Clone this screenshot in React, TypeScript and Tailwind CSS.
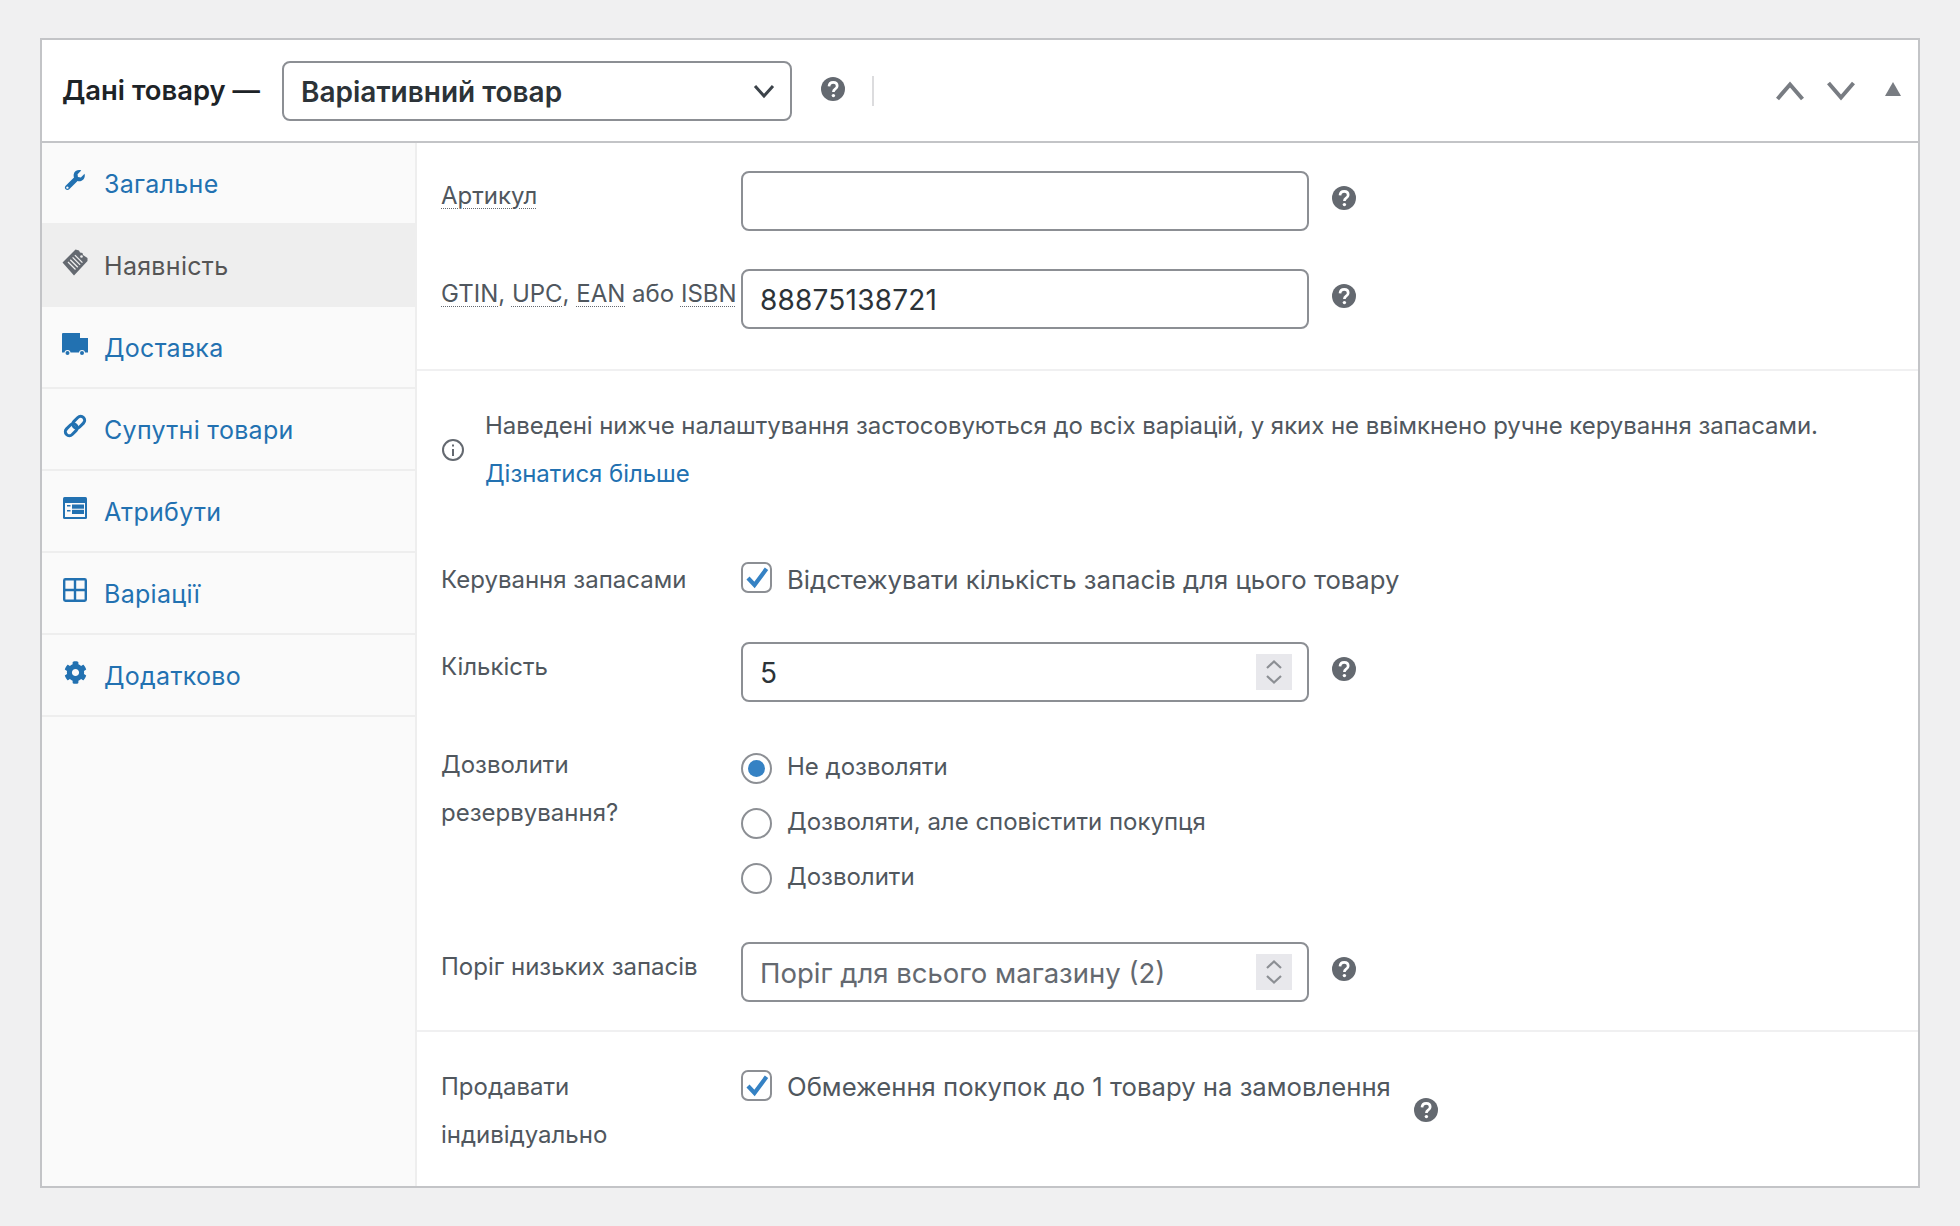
import React from "react";
import { FaCog } from "react-icons/fa";

const Help = ({ className = "" }: { className?: string }) => (
  <svg viewBox="0 0 24 24" className={`w-6 h-6 shrink-0 ${className}`}>
    <circle cx="12" cy="12" r="12" fill="#646970" />
    <path d="M8 9.4 C8.2 6.8 9.9 5.4 12.2 5.4 C14.6 5.4 16.2 6.9 16.2 8.9 C16.2 10.5 15.3 11.3 14.1 12.1 C13 12.9 12.4 13.4 12.4 15" fill="none" stroke="#ffffff" strokeWidth="2.7" />
    <circle cx="12.4" cy="18.6" r="1.7" fill="#ffffff" />
  </svg>
);

const WrenchIcon = () => (
  <svg viewBox="0 0 24 24" className="w-[22px] h-[22px]" fill="#2271b1">
    <path fillRule="evenodd" d="M22.4 5.2 L18.4 9.2 L15.2 8.8 L14.8 5.6 L18.8 1.6 C15.6 0.4 11.4 2 10.6 5.6 C10.3 7 10.5 8.2 10.9 9.2 L1.8 18.2 C0.6 19.4 0.7 21.2 1.8 22.2 C2.9 23.3 4.6 23.3 5.7 22.2 L14.8 13.2 C19 14.6 24 10.8 22.4 5.2 Z M3.7 19 A1.3 1.3 0 1 0 3.71 19 Z" />
  </svg>
);
const TagIcon = () => (
  <svg viewBox="0 0 26 27" className="w-[26px] h-[27px]" fill="#646970">
    <path d="M0.5 13.5 L13.5 0.5 L17 1.5 L18 3.5 L20.5 4 L21 6 L25.5 9 L25.5 12 L12 26.5 Z" />
    <g stroke="#eeeeee" strokeWidth="1.3">
      <path d="M6 13 L13.5 20.5" />
      <path d="M8.3 10.7 L15.8 18.2" />
      <path d="M10.6 8.4 L18.1 15.9" />
      <path d="M12.9 6.1 L20.4 13.6" />
    </g>
    <circle cx="19.5" cy="7.5" r="1.3" fill="#eeeeee" />
  </svg>
);
const TruckIcon = () => (
  <svg viewBox="0 0 26 23" className="w-[26px] h-[23px]">
    <path d="M0 1 A1 1 0 0 1 1 0 H18 V5 H26 V19.5 H0 Z" fill="#2271b1" />
    <circle cx="5.5" cy="20" r="3" fill="#fafafa" />
    <circle cx="20" cy="20" r="3" fill="#fafafa" />
    <circle cx="5.5" cy="20" r="2" fill="#2271b1" />
    <circle cx="20" cy="20" r="2" fill="#2271b1" />
  </svg>
);
const LinkIcon = () => (
  <svg viewBox="0 0 24 24" className="w-[24px] h-[24px]" fill="none" stroke="#2271b1" strokeWidth="3">
    <g transform="rotate(-45 12 12)">
      <rect x="0" y="8" width="13.5" height="8" rx="4" />
      <rect x="10.5" y="8" width="13.5" height="8" rx="4" />
    </g>
  </svg>
);
const AttrIcon = () => (
  <svg viewBox="0 0 24 22" className="w-6 h-[22px]">
    <rect width="24" height="22" rx="1.5" fill="#2271b1" />
    <rect x="2" y="6" width="20" height="14" fill="#fafafa" />
    <g fill="#2271b1">
      <rect x="4" y="8" width="3.5" height="1.5" />
      <rect x="4" y="13" width="3.5" height="1.5" />
      <rect x="9" y="7.5" width="12" height="4.2" />
      <rect x="9" y="12.8" width="12" height="4.2" />
    </g>
  </svg>
);
const GridIcon = () => (
  <svg viewBox="0 0 24 24" className="w-6 h-6" fill="none" stroke="#2271b1" strokeWidth="2.4">
    <rect x="1.2" y="1.2" width="21.6" height="21.6" rx="1.2" />
    <path d="M12 1 V23 M1 12 H23" />
  </svg>
);

const tabs = [
  { label: "Загальне", icon: <WrenchIcon /> },
  { label: "Наявність", icon: <TagIcon />, active: true },
  { label: "Доставка", icon: <TruckIcon /> },
  { label: "Супутні товари", icon: <LinkIcon /> },
  { label: "Атрибути", icon: <AttrIcon /> },
  { label: "Варіації", icon: <GridIcon /> },
  { label: "Додатково", icon: <FaCog className="w-[23px] h-[23px] text-[#2271b1]" /> },
];

const Check = ({ className = "" }: { className?: string }) => (
  <span className={`w-[31px] h-[31px] rounded-[7px] border-2 border-[#8c8f94] bg-white flex items-center justify-center shrink-0 ${className}`}>
    <svg viewBox="2 2 27 27" className="w-[27px] h-[27px]" fill="none" stroke="#3582c4" strokeWidth="4.2">
      <path d="M7 16 L13.5 23 L25.5 6.8" />
    </svg>
  </span>
);

const Radio = ({ on, label }: { on?: boolean; label: string }) => (
  <div className="flex items-center gap-[15px] h-[31px]">
    <span className="w-[31px] h-[31px] rounded-full border-2 border-[#8c8f94] bg-white flex items-center justify-center shrink-0">
      {on && <span className="w-[17px] h-[17px] rounded-full bg-[#3582c4]" />}
    </span>
    <span className="mb-[3px]">{label}</span>
  </div>
);

const Input = ({ value, muted, spin }: { value: string; muted?: boolean; spin?: boolean }) => (
  <div className={`w-[568px] h-[60px] rounded-[8px] border-2 border-[#8c8f94] bg-white flex items-center pl-[17px] pr-[15px] shrink-0 ${muted ? "text-[27.5px] tracking-normal text-[#646970]" : "text-[28px] tracking-[0.2px] text-[#2c3338]"}`}>
    <span className="flex-1 pt-[2px]">{value}</span>
    {spin && (
      <span className="w-[36px] h-[36px] bg-[#e8e8ec] flex items-center justify-center">
        <svg viewBox="0 0 36 36" className="w-[36px] h-[36px]" fill="none" stroke="#8c8f94" strokeWidth="2.2">
          <path d="M11 14 L18 7.5 L25 14 M11 22 L18 28.5 L25 22" />
        </svg>
      </span>
    )}
  </div>
);

const Abbr = ({ children }: { children: React.ReactNode }) => (
  <span className="underline decoration-dotted decoration-1 decoration-[#646970] underline-offset-[4px]">{children}</span>
);

export default function App() {
  return (
    <div className="min-h-[1226px] bg-[#f0f0f1] pt-[38px] pl-[40px] text-[24px] leading-[48px] text-[#50575e] font-['Inter','Noto_Sans',sans-serif]">
      <div className="w-[1880px] h-[1150px] border-2 border-[#c3c4c7] bg-white flex flex-col">
        <header className="h-[103px] border-b-2 border-[#c3c4c7] flex items-center pl-[20px] shrink-0">
          <span className="text-[27.4px] font-semibold text-[#1d2327] w-[220px] mb-[2px]">Дані товару —</span>
          <div className="w-[510px] h-[60px] rounded-[8px] border-2 border-[#8c8f94] flex items-center justify-between pl-[17px] pr-[14px] text-[28px] font-semibold text-[#2c3338]">
            <span className="pt-[2px]">Варіативний товар</span>
            <svg viewBox="0 0 24 24" className="w-[24px] h-[24px]" fill="none" stroke="#3c434a" strokeWidth="3">
              <path d="M3 7 L12 17 L21 7" />
            </svg>
          </div>
          <Help className="ml-[29px] mb-[3px]" />
          <span className="w-[2px] h-[30px] bg-[#dcdcde] ml-[27px]" />
          <div className="ml-auto flex items-center pr-[17px] gap-[23px]">
            <svg viewBox="0 0 28 20" className="w-[28px] h-[20px]" fill="none" stroke="#787c82" strokeWidth="4">
              <path d="M1.5 18 L14 3.5 L26.5 18" />
            </svg>
            <svg viewBox="0 0 28 20" className="w-[28px] h-[20px]" fill="none" stroke="#787c82" strokeWidth="4">
              <path d="M1.5 2 L14 16.5 L26.5 2" />
            </svg>
            <svg viewBox="0 0 16 14" className="w-[16px] h-[14px] ml-[7px] mb-[4px]" fill="#787c82">
              <path d="M8 0 L16 14 H0 Z" />
            </svg>
          </div>
        </header>
        <div className="flex flex-1 min-h-0">
          <nav className="w-[375px] bg-[#fafafa] border-r-2 border-[#eeeeee] shrink-0 text-[25px] tracking-[0.3px]">
            {tabs.map((t) => (
              <div
                key={t.label}
                className={`h-[82px] border-b-2 border-[#eeeeee] flex items-center pl-[20px] ${t.active ? "bg-[#eeeeee] text-[#555555]" : "text-[#2271b1]"}`}
              >
                <span className="w-[42px] flex justify-center pr-[16px] mb-[6px]">{t.icon}</span>
                <span className="pt-[2px]">{t.label}</span>
              </div>
            ))}
          </nav>
          <main className="flex-1 min-w-0">
            <section className="pt-[28px] pb-[40px] pl-[24px] border-b-2 border-[#f0f0f1] flex flex-col gap-[38px]">
              <div className="flex items-start">
                <div className="w-[300px] shrink-0 pt-[1px]"><Abbr>Артикул</Abbr></div>
                <Input value="" />
                <Help className="ml-[23px] mt-[15px]" />
              </div>
              <div className="flex items-start">
                <div className="w-[300px] shrink-0 whitespace-nowrap pt-[1px]"><Abbr>GTIN</Abbr>, <Abbr>UPC</Abbr>, <Abbr>EAN</Abbr> або <Abbr>ISBN</Abbr></div>
                <Input value="88875138721" />
                <Help className="ml-[23px] mt-[15px]" />
              </div>
            </section>
            <section className="pt-[30px] pb-[28px] pl-[24px] border-b-2 border-[#f0f0f1]">
              <div className="flex items-center mb-[57px]">
                <svg viewBox="0 0 24 24" className="w-[24px] h-[24px] shrink-0" fill="none" stroke="#646970" strokeWidth="2">
                  <circle cx="12" cy="12" r="10" />
                  <path d="M12 11 V18 M12 6.5 V8.5" />
                </svg>
                <div className="ml-[20px] tracking-[-0.05px]">
                  <div className="whitespace-nowrap pt-[1px]">Наведені нижче налаштування застосовуються до всіх варіацій, у яких не ввімкнено ручне керування запасами.</div>
                  <div className="text-[#2271b1] -mt-[1px] pt-[1px]">Дізнатися більше</div>
                </div>
              </div>
              <div className="flex items-start mb-[38px]">
                <div className="w-[300px] shrink-0 pt-[1px]">Керування запасами</div>
                <Check className="mt-[7px]" />
                <span className="ml-[15px] text-[25.7px] pt-[1px]">Відстежувати кількість запасів для цього товару</span>
              </div>
              <div className="flex items-start mb-[39px]">
                <div className="w-[300px] shrink-0 pt-[1px]">Кількість</div>
                <Input value="5" spin />
                <Help className="ml-[23px] mt-[15px]" />
              </div>
              <div className="flex items-start mb-[48px]">
                <div className="w-[300px] shrink-0">Дозволити<br />резервування?</div>
                <div className="flex flex-col gap-[24px] mt-[12px]">
                  <Radio on label="Не дозволяти" />
                  <Radio label="Дозволяти, але сповістити покупця" />
                  <Radio label="Дозволити" />
                </div>
              </div>
              <div className="flex items-start">
                <div className="w-[300px] shrink-0 pt-[1px]">Поріг низьких запасів</div>
                <Input value="Поріг для всього магазину (2)" muted spin />
                <Help className="ml-[23px] mt-[15px]" />
              </div>
            </section>
            <section className="pt-[31px] pl-[24px] flex items-start">
              <div className="w-[300px] shrink-0">Продавати<br />індивідуально</div>
              <Check className="mt-[7px]" />
              <span className="ml-[15px] text-[25.7px] whitespace-nowrap">Обмеження покупок до 1 товару на замовлення</span>
              <Help className="ml-[23px] mt-[35px]" />
            </section>
          </main>
        </div>
      </div>
    </div>
  );
}
